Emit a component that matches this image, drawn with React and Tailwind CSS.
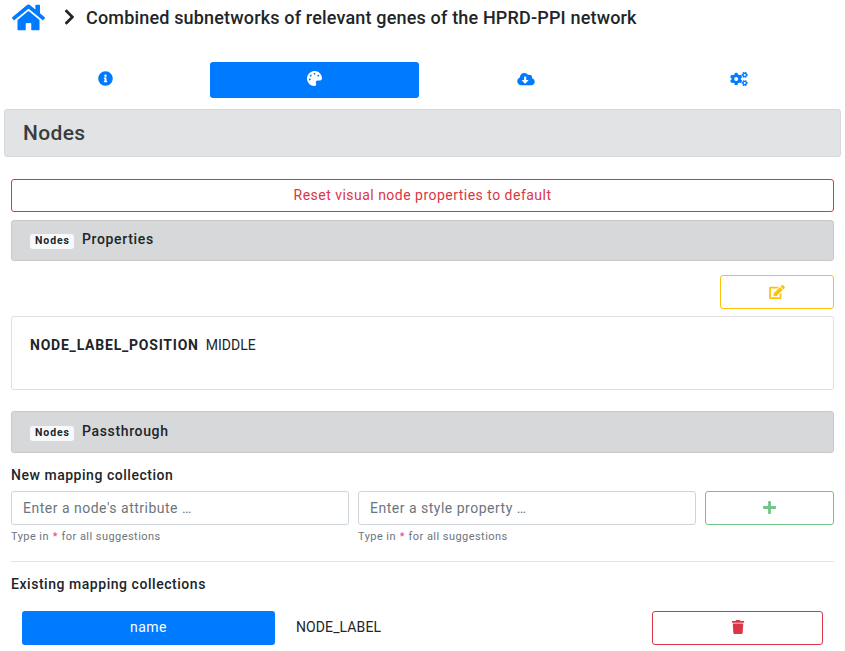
import React from "react";
import {
  FaHome,
  FaChevronRight,
  FaInfoCircle,
  FaPalette,
  FaCloudDownloadAlt,
  FaCogs,
  FaEdit,
  FaPlus,
  FaTrash,
} from "react-icons/fa";

function SectionHeader({ title, className }) {
  return (
    <div
      className={`flex items-start rounded-[3px] border border-[#c6c8ca] bg-[#d6d8d9] pl-[18px] ${className}`}
    >
      <span className="mt-[13px] h-[15px] w-11 rounded-[3px] bg-[#f8f9fa] pl-[5px] text-[10.5px] leading-[14px] font-bold tracking-[0.9px]">
        Nodes
      </span>
      <h6 className="mt-[9px] ml-2 text-sm leading-[18px] font-medium tracking-[0.65px]">{title}</h6>
    </div>
  );
}

function MappingField({ placeholder }) {
  return (
    <div className="w-[338px]">
      <input
        className="block h-[34px] w-full rounded-[3px] border border-[#ced4da] px-[11px] text-sm tracking-[0.5px] placeholder:text-[#6c757d]"
        placeholder={placeholder}
      />
      <small className="mt-1 block text-[11px] leading-4 tracking-[0.45px] text-[#6c757d]">
        Type in <span className="px-[0.5px] text-[#e83e8c]">*</span> for all suggestions
      </small>
    </div>
  );
}

export default function App() {
  return (
    <div className="h-[651px] w-[845px] overflow-hidden bg-white font-['Roboto',sans-serif] text-sm text-[#212529]">
      <header className="flex h-[62px] items-start pl-3">
        <FaHome className="mt-px size-[33px] text-[#007bff]" />
        <FaChevronRight className="mt-2 ml-[19px] h-[18px] w-[11px]" />
        <h1 className="mt-[7px] ml-[11px] text-lg leading-[22px] font-medium tracking-[0.17px] whitespace-nowrap">
          Combined subnetworks of relevant genes of the HPRD-PPI network
        </h1>
      </header>

      <nav className="flex h-9 w-[845px] text-[#007bff]">
        <a className="flex w-[210px] items-center justify-center pb-[3px]">
          <FaInfoCircle className="size-[15px]" />
        </a>
        <a className="flex w-[209px] items-center justify-center rounded-[3px] bg-[#007bff] pb-[3px] text-white">
          <FaPalette className="size-[15px]" />
        </a>
        <a className="flex w-[214px] items-center justify-center pb-[3px]">
          <FaCloudDownloadAlt className="h-[14px] w-[18px]" />
        </a>
        <a className="flex w-[212px] items-center justify-center pb-[3px]">
          <FaCogs className="h-[14px] w-[18px]" />
        </a>
      </nav>

      <div className="mx-1 mt-[11px] h-12 rounded-[3px] border border-[#d6d8db] bg-[#e2e3e5] pl-[18px]">
        <h2 className="text-[21px] leading-[46px] font-medium tracking-[0.35px] text-[#383d41]">Nodes</h2>
      </div>

      <main className="mr-[11px] ml-[11px] flex flex-col pt-[22px]">
        <button className="h-[33px] rounded-[3px] border border-[#dc3545] pb-[2px] text-sm leading-[28px] tracking-[0.48px] text-[#dc3545]">
          Reset visual node properties to default
        </button>

        <SectionHeader title="Properties" className="mt-2 h-[41px]" />

        <button className="mt-[14px] flex h-[34px] w-[114px] items-center justify-center self-end rounded-[3px] border border-[#ffc107] pb-px text-[#ffc107]">
          <FaEdit className="h-[14px] w-[16px]" />
        </button>

        <div className="mt-[7px] h-[74px] rounded-[3px] border border-[#dfdfdf] px-[18px] pt-[18px] leading-[21px]">
          <b className="font-bold tracking-[0.78px]">NODE_LABEL_POSITION</b>
          <span className="ml-[7px]">MIDDLE</span>
        </div>

        <SectionHeader title="Passthrough" className="mt-[21px] h-[42px] pt-px" />

        <h6 className="mt-[13px] h-[25px] text-sm leading-[18px] font-medium tracking-[0.53px]">
          New mapping collection
        </h6>
        <div className="flex gap-[9px]">
          <MappingField placeholder="Enter a node's attribute …" />
          <MappingField placeholder="Enter a style property …" />
          <button className="flex h-[34px] flex-1 items-center justify-center rounded-[3px] border border-[#71c686] text-[#71c686]">
            <FaPlus className="mb-[2px] size-[15px]" />
          </button>
        </div>

        <hr className="mt-4 border-[#e5e5e5]" />

        <h6 className="mt-[13px] text-sm leading-[18px] font-medium tracking-[0.54px]">
          Existing mapping collections
        </h6>
        <div className="mt-[18px] flex items-center px-[11px]">
          <button className="h-[34px] w-[253px] rounded-[3px] bg-[#007bff] pb-[2px] text-sm tracking-[0.5px] text-white">
            name
          </button>
          <span className="mb-[2px] ml-[21px] tracking-[0.1px]">NODE_LABEL</span>
          <button className="ml-auto flex h-[34px] w-[171px] items-center justify-center rounded-[3px] border border-[#dc3545] text-[#dc3545]">
            <FaTrash className="mb-[3px] size-[14px]" />
          </button>
        </div>
      </main>
    </div>
  );
}
